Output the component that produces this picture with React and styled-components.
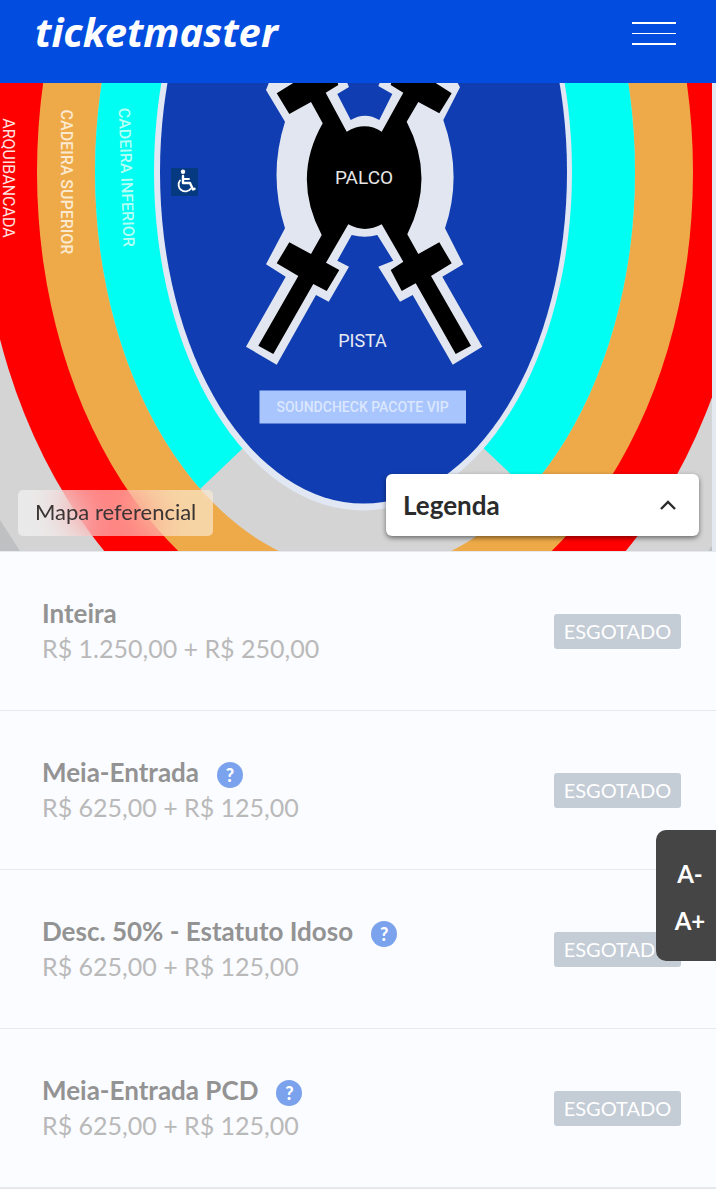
import React from "react";
import styled, { createGlobalStyle } from "styled-components";

const GlobalStyle = createGlobalStyle`
  *, *::before, *::after { box-sizing: border-box; }
  body {
    margin: 0;
    background: #ffffff;
    color: #262626;
    font-family: Lato, "Open Sans", sans-serif;
  }
  button { font: inherit; border: 0; cursor: pointer; }
  h2, p, ul { margin: 0; padding: 0; }
`;

const Header = styled.header`
  display: flex;
  align-items: flex-start;
  justify-content: space-between;
  height: 83px;
  padding: 8px 40px 0 35px;
  background: #024ddf;
`;

const Logo = styled.a`
  color: #ffffff;
  font-family: "Noto Sans", "Open Sans", sans-serif;
  font-size: 40px;
  font-style: italic;
  font-weight: 700;
  line-height: 48px;
  text-decoration: none;
`;

const MenuButton = styled.button`
  display: flex;
  padding: 14px 0 0;
  background: transparent;
`;

const MapPanel = styled.section`
  position: relative;
  padding-right: 4px;
  border-bottom: 1px solid #e6e9ee;
  background: #e4e8f1;
`;

const VenueMap = styled.svg`
  display: block;
  width: 100%;
  height: auto;
`;

const MapLabel = styled.text`
  fill: ${({ $fill }) => $fill || "#e8ebf3"};
  font-family: Roboto, sans-serif;
  font-size: ${({ $size }) => $size || 16}px;
  font-weight: ${({ $weight }) => $weight || 400};
  text-anchor: middle;
`;

const MapOverlay = styled.div`
  position: absolute;
  inset: auto 17px 15px 18px;
  display: flex;
  align-items: flex-end;
  justify-content: space-between;
  gap: 16px;
`;

const MapNote = styled.span`
  padding: 0 17px 2px;
  border-radius: 5px;
  background: rgba(255, 255, 255, 0.5);
  backdrop-filter: blur(20px);
  color: #3a3434;
  font-size: 22px;
  line-height: 44px;
`;

const LegendButton = styled.button`
  display: flex;
  flex: 0 1 313px;
  align-items: center;
  justify-content: space-between;
  height: 62px;
  padding: 0 23px 0 17px;
  border-radius: 6px;
  background: #ffffff;
  box-shadow: 0 2px 5px rgba(0, 0, 0, 0.5);
  color: #2b2b2b;
  font-size: 26px;
  font-weight: 700;
`;

const TicketList = styled.ul`
  border-bottom: 1px solid #e3e7e9;
  background: #fbfcff;
  list-style: none;
`;

const TicketRow = styled.li`
  display: flex;
  align-items: center;
  justify-content: space-between;
  min-height: 159px;
  padding: 0 35px 0 42px;
  border-bottom: 1px solid #e6e9ed;
`;

const TicketTitle = styled.div`
  display: flex;
  align-items: center;
  gap: 18px;
`;

const TicketName = styled.h2`
  color: #939393;
  font-size: 26px;
  font-weight: 700;
  line-height: 35px;
`;

const TicketPrice = styled.p`
  color: #b9b9b9;
  font-size: 25px;
  line-height: 35px;
`;

const HelpButton = styled.button`
  width: 26px;
  height: 26px;
  margin-top: 4px;
  padding: 0;
  border-radius: 50%;
  background: #7ba2ec;
  color: #ffffff;
  font-size: 18px;
  font-weight: 900;
  line-height: 26px;
`;

const SoldOut = styled.span`
  min-width: 127px;
  border-radius: 3px;
  background: #c4ccd6;
  color: #ffffff;
  font-size: 20px;
  line-height: 35px;
  text-align: center;
`;

const TextSizer = styled.div`
  position: fixed;
  top: 830px;
  right: 0;
  display: flex;
  flex-direction: column;
  width: 60px;
  padding: 20px 0 17px 8px;
  border-radius: 10px 0 0 10px;
  background: #454545;
`;

const SizeButton = styled.button`
  padding: 0;
  background: transparent;
  color: #ffffff;
  font-size: 24px;
  font-weight: 700;
  line-height: 47px;
`;

const tickets = [
  { name: "Inteira", price: "R$ 1.250,00 + R$ 250,00" },
  { name: "Meia-Entrada", price: "R$ 625,00 + R$ 125,00", help: true },
  { name: "Desc. 50% - Estatuto Idoso", price: "R$ 625,00 + R$ 125,00", help: true },
  { name: "Meia-Entrada PCD", price: "R$ 625,00 + R$ 125,00", help: true },
];

function Venue() {
  return (
    <VenueMap viewBox="0 83 712 468" role="img" aria-label="Mapa">
      <defs>
        <clipPath id="lower-tier">
          <path d="M363 334 116 569H0V83H712V569H611Z" />
        </clipPath>
      </defs>
      <rect y="83" width="712" height="468" fill="#d4d4d4" />
      <path d="M0 520 20 551H0ZM712 546V551H708Z" fill="#bfc0c2" />
      <ellipse cx="365" cy="172" rx="386" ry="514" fill="#ff0000" />
      <ellipse cx="365" cy="172" rx="328" ry="461" fill="#eeaa48" />
      <ellipse cx="365" cy="172" rx="270" ry="400" fill="#d4d4d4" />
      <ellipse cx="365" cy="172" rx="270" ry="400" fill="#00fff2" clipPath="url(#lower-tier)" />
      <ellipse cx="363" cy="172" rx="209" ry="338.5" fill="#e1e7f3" />
      <ellipse cx="363.5" cy="172" rx="203.5" ry="331.5" fill="#103eb2" />

      <path
        fill="#e1e6f0"
        d="M270 80 266 90 285 121.700Q268 175 285 228.300L266 264.300 285.700 276.700 246 346.700 276.700 364.700 316 295 328.700 301.700 349 266.700 337.300 260.700 351.700 235Q365 238.500 377.300 235L393.300 260.700 378.300 266.700 400 301.700 412.700 295 452.700 364.700 482.300 346.700 442.300 276.700 463.300 264.300 445 228.300Q463 175 443.300 120L460 87.300 456 80H381L378.300 86 392.300 94 379.300 120Q365 111.500 350.700 120L337.300 94 349 87 346 80Z"
      />
      <path
        fill="#000000"
        d="M298 80 276.700 93.300 289.300 114 311 102 322.700 123.300Q291.500 178 321.700 235L311 254 289.300 242.300 276.700 263.300 298.300 276 258.300 345.700 273.300 354 313.300 284 326.700 291 339.300 270 326 262.700 348.300 224.300Q365 233.500 381.700 224.300L403.300 261.700 390.700 270 401.700 291 415.700 283.300 455.700 354 471 345.700 431 276 451.700 263.300 439.300 242.300 418.300 254 407.300 234.300Q436 178 406.700 121.700L418.300 102 439.300 113.300 451.700 93.300 431 80H392L390.700 85 403.300 92.700 381.700 131.700Q365 121 346.700 131.700L325.700 92.700 338.300 85 337 80Z"
      />

      <rect x="171" y="168" width="27" height="28" fill="#063a80" />
      <circle cx="183" cy="171.700" r="2.200" fill="#ffffff" />
      <g fill="none" stroke="#ffffff" strokeLinecap="round" strokeLinejoin="round">
        <path d="M183 176v7h7l3 6.500 1.500-.7" strokeWidth="2.400" />
        <path d="M183.500 179h5.500" strokeWidth="1.800" />
        <path d="M180 180.500a6.800 6.800 0 1 0 10.800 8.300" strokeWidth="1.800" />
      </g>

      <MapLabel x="364" y="183.500" $size={19} $fill="#e6e6e6">PALCO</MapLabel>
      <MapLabel x="362.500" y="347" $size={18}>PISTA</MapLabel>
      <rect x="259.500" y="390.500" width="206.500" height="33" fill="#a9c5fd" />
      <MapLabel x="362.500" y="412" $size={14} $weight={500} $fill="#dbe7fe">
        SOUNDCHECK PACOTE VIP
      </MapLabel>
      <MapLabel transform="translate(3 178) rotate(90)" $fill="#ffe3e0">ARQUIBANCADA</MapLabel>
      <MapLabel transform="translate(61 182) rotate(90)" $weight={500} $fill="#fbe9d0">
        CADEIRA SUPERIOR
      </MapLabel>
      <MapLabel transform="translate(121 177.500) rotate(88)" $weight={500} $fill="#b5fff5">
        CADEIRA INFERIOR
      </MapLabel>
    </VenueMap>
  );
}

export default function App() {
  return (
    <>
      <GlobalStyle />
      <Header>
        <Logo href="#">ticketmaster</Logo>
        <MenuButton type="button" aria-label="Menu">
          <svg width="44" height="23" stroke="#ffffff" aria-hidden="true">
            <path d="M0 1h44M0 22h44" strokeWidth="2" />
            <path d="M0 11.500h44" strokeWidth="1" />
          </svg>
        </MenuButton>
      </Header>
      <main>
        <MapPanel>
          <Venue />
          <MapOverlay>
            <MapNote>Mapa referencial</MapNote>
            <LegendButton type="button">
              Legenda
              <svg width="16" height="10" fill="none" stroke="#2b2b2b" strokeWidth="2.400" aria-hidden="true">
                <path d="M1 9 8 2l7 7" />
              </svg>
            </LegendButton>
          </MapOverlay>
        </MapPanel>
        <TicketList>
          {tickets.map(({ name, price, help }) => (
            <TicketRow key={name}>
              <div>
                <TicketTitle>
                  <TicketName>{name}</TicketName>
                  {help && <HelpButton type="button">?</HelpButton>}
                </TicketTitle>
                <TicketPrice>{price}</TicketPrice>
              </div>
              <SoldOut>ESGOTADO</SoldOut>
            </TicketRow>
          ))}
        </TicketList>
      </main>
      <TextSizer>
        <SizeButton type="button">A-</SizeButton>
        <SizeButton type="button">A+</SizeButton>
      </TextSizer>
    </>
  );
}
